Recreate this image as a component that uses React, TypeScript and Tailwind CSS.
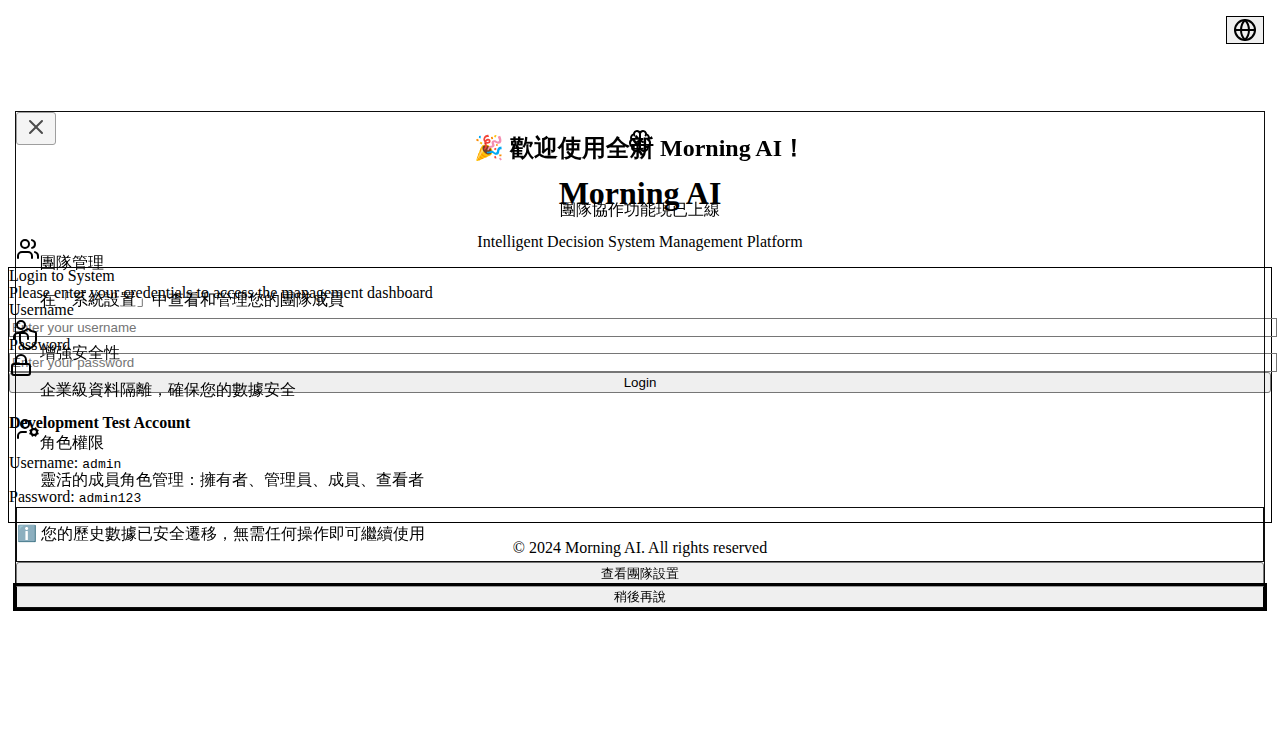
import { Brain, Globe, Lock, Shield, User, UserCog, Users, X } from 'lucide-react';
import type { ReactNode } from 'react';

const control =
  "block border bg-[#efefef] text-center font-['Liberation_Sans','WenQuanYi_Zen_Hei',sans-serif] text-black";
const input =
  "block h-[19px] w-[1268px] border border-[#767676] bg-transparent px-[2px] font-['Liberation_Sans',sans-serif] text-[13.3333px] leading-[15px] placeholder:text-[#757575] placeholder:opacity-100";

function Field({ label, placeholder, type, icon }: { label: string; placeholder: string; type: string; icon: ReactNode }) {
  return (
    <div>
      <label className="block h-4 leading-[15px]">{label}</label>
      <div className="relative">
        <span className="absolute left-0 top-0">{icon}</span>
        <input className={input} type={type} placeholder={placeholder} />
      </div>
    </div>
  );
}

function Feature({ icon, title, text }: { icon: ReactNode; title: string; text: string }) {
  return (
    <div className="flex h-[90px]">
      <div className="shrink-0">{icon}</div>
      <div className="pt-[15px]">
        <h3 className="h-[21px] leading-[21px]">{title}</h3>
        <p className="mt-4 h-[21px] leading-[21px]">{text}</p>
      </div>
    </div>
  );
}

function LoginPage() {
  return (
    <main className="px-2 pt-[129px]">
      <header className="flex flex-col items-center text-center">
        <Brain size={24} />
        <h1 className="mt-[22px] h-[37px] text-[32px] font-bold leading-[37px]">Morning AI</h1>
        <p className="mt-[21px] h-[18px] leading-[18px]">Intelligent Decision System Management Platform</p>
      </header>
      <section className="mt-4 h-[256px] border border-black">
        <div className="h-[17px] leading-[15px]">Login to System</div>
        <div className="h-[17px] leading-[15px]">Please enter your credentials to access the management dashboard</div>
        <form>
          <Field label="Username" type="text" placeholder="Enter your username" icon={<User size={24} />} />
          <Field label="Password" type="password" placeholder="Enter your password" icon={<Lock size={24} />} />
          <button type="button" className={`${control} h-[21px] w-full rounded-[3px] border-[#767676] text-[13.3333px] leading-[19px]`}>Login</button>
        </form>
        <p className="mt-[21px] h-[18px] font-bold leading-[18px]">Development Test Account</p>
        <p className="mt-[22px] h-[18px] leading-[18px]">
          Username: <code className="font-['Liberation_Mono',monospace] text-[13px]">admin</code>
        </p>
        <p className="mt-4 h-[18px] leading-[18px]">
          Password: <code className="font-['Liberation_Mono',monospace] text-[13px]">admin123</code>
        </p>
      </section>
      <footer className="mt-4 text-center leading-[18px]">© 2024 Morning AI. All rights reserved</footer>
    </main>
  );
}

function WelcomeDialog() {
  return (
    <div role="dialog" className="fixed inset-x-[15px] top-[111px] h-[499px] border border-black/95">
      <div className="flex flex-col">
        <header className="relative h-[125px] text-center">
          <button className={`${control} absolute left-0 top-0 flex h-[33px] w-10 items-start justify-center rounded-[3px] border-[#767676] pt-[2px] opacity-70`} aria-label="Close">
            <X size={24} strokeWidth={2} />
          </button>
          <h2 className="pt-[18px] font-['Liberation_Serif',serif] text-[24px] font-bold leading-[36px]">🎉 歡迎使用全新 Morning AI！</h2>
          <p className="mt-[33px] h-[21px] leading-[21px]">團隊協作功能現已上線</p>
        </header>
        <Feature icon={<Users size={24} />} title="團隊管理" text="在「系統設置」中查看和管理您的團隊成員" />
        <Feature icon={<Shield size={24} />} title="增強安全性" text="企業級資料隔離，確保您的數據安全" />
        <Feature icon={<UserCog size={24} />} title="角色權限" text="靈活的成員角色管理：擁有者、管理員、成員、查看者" />
        <div className="h-[55px] border border-black/95 pt-[15px] leading-[21px]">ℹ️ 您的歷史數據已安全遷移，無需任何操作即可繼續使用</div>
        <button className={`${control} h-[24px] rounded-[3px] border-[#767676] text-[13px] leading-[20px]`}>查看團隊設置</button>
        <button className={`${control} h-[22px] border-x-black border-b-[#101010] border-t-[#9a9a9a] text-[13px] leading-[18px] outline-[3px] outline-black`}>稍後再說</button>
      </div>
    </div>
  );
}

export default function App() {
  return (
    <div lang="en" className="h-[736px] overflow-hidden bg-white font-['Liberation_Serif','WenQuanYi_Zen_Hei',serif] text-base text-black">
      <button className="fixed right-4 top-4 h-7 w-[38px] border border-black bg-[#efefef] px-[6px] py-px" aria-label="Language">
        <Globe size={24} />
      </button>
      <LoginPage />
      <WelcomeDialog />
    </div>
  );
}
